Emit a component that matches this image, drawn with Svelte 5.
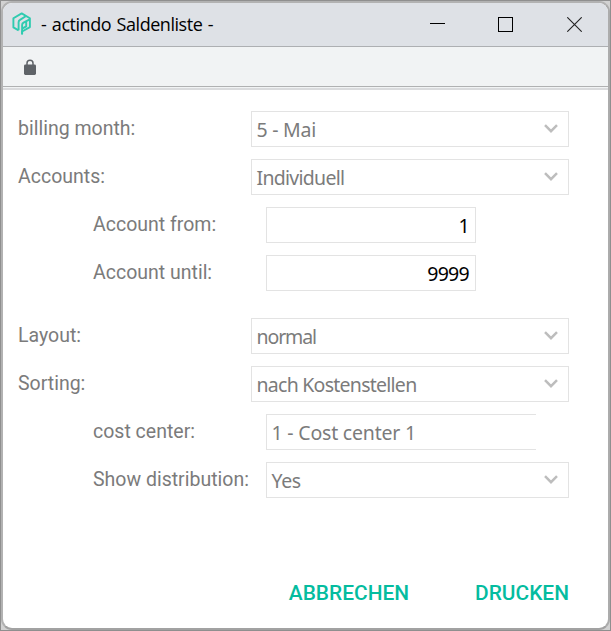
<script>
  const groups = [
    [
      { label: 'billing month:', value: '5 - Mai', kind: 'select', ls: -0.25 },
      { label: 'Accounts:', value: 'Individuell', kind: 'select', ls: -0.72 },
      { label: 'Account from:', value: '1', kind: 'number', sub: true, ls: -0.7 },
      { label: 'Account until:', value: '9999', kind: 'number', sub: true, ls: -0.7 }
    ],
    [
      { label: 'Layout:', value: 'normal', kind: 'select', ls: -1.1 },
      { label: 'Sorting:', value: 'nach Kostenstellen', kind: 'select', ls: -0.74 },
      { label: 'cost center:', value: '1 - Cost center 1', kind: 'open', sub: true, ls: -0.2 },
      { label: 'Show distribution:', value: 'Yes', kind: 'select', sub: true, ls: -0.35 }
    ]
  ];
</script>

<div class="frame">
  <div class="window">
    <header>
      <svg class="logo" width="20" height="24" viewBox="0 0 20 24" fill="none" stroke="#2fcbb0" stroke-width="1.9" stroke-linejoin="round">
        <path d="M6.6 18.3 1.4 15.4V6.3L9.7 1.4l8.2 4.9v8.8l-7.8 4.4v2.8" />
        <path d="M6.6 18.3V10.3q0-1.6 1.4-2.4L13.7 4.3" />
        <path d="M10.1 22.5V13q0-1.6 1.4-2.4l6.2-3.3M10.2 16.6l4-2.2V10" />
      </svg>
      <h1>- actindo Saldenliste -</h1>
      <div class="controls">
        <svg width="15" height="15" shape-rendering="crispEdges"><path d="M0 6.5h15" stroke="#000" /></svg>
        <svg width="15" height="15" shape-rendering="crispEdges"><path d="M.5.5h14v14H.5z" stroke="#000" fill="none" /></svg>
        <svg width="15" height="15"><path d="M.3.3l14.4 14.4M14.7.3.3 14.7" stroke="#222" stroke-width="1.1" /></svg>
      </div>
    </header>
    <div class="address">
      <svg width="12" height="17" viewBox="0 0 12 17">
        <path d="M3 7V4.2a3 3 0 0 1 6 0V7" fill="none" stroke="#5f6368" stroke-width="1.5" />
        <rect y="5.5" width="12" height="10.5" rx="1.4" fill="#5f6368" />
      </svg>
    </div>
    <main>
      {#each groups as group}
        <section>
          {#each group as row}
            <div class="row" class:sub={row.sub}>
              <span class="label">{row.label}</span>
              <div class="field {row.kind}">
                <span style:letter-spacing="{row.ls}px">{row.value}</span>
                {#if row.kind === 'select'}
                  <svg width="14" height="10" viewBox="0 0 14 10"><path d="M1 1.2 7 7.2l6-6" fill="none" stroke="#bdbdbd" stroke-width="2.5" /></svg>
                {/if}
              </div>
            </div>
          {/each}
        </section>
      {/each}
      <footer>
        <button>ABBRECHEN</button>
        <button>DRUCKEN</button>
      </footer>
    </main>
  </div>
</div>

<style>
  .frame {
    box-sizing: border-box;
    width: 611px;
    height: 631px;
    border: 1px solid #8f8f8f;
    background: #d2d2d2;
    overflow: hidden;
  }
  .window {
    box-sizing: border-box;
    width: 609px;
    height: 629px;
    border: 2px solid #b2b2b2;
    border-bottom-color: #a2a2a2;
    border-right-color: #acacac;
    border-radius: 11px;
    background: #fff;
    overflow: hidden;
    display: flex;
    flex-direction: column;
  }
  header {
    box-sizing: border-box;
    height: 44px;
    flex: none;
    background: #dee1e6;
    border-bottom: 1px solid #adafb2;
    display: flex;
    align-items: center;
    padding: 0 26px 0 9px;
  }
  .logo { margin-top: -1px; }
  h1 {
    margin: 0 0 1px 9px;
    font: 400 18px/24px "Open Sans", sans-serif;
    letter-spacing: -0.46px;
    word-spacing: 1.3px;
    color: #000;
    white-space: pre;
  }
  .controls { margin: 0 0 1px auto; display: flex; gap: 54px; }
  .controls svg { display: block; }
  .controls svg:first-child { margin-right: -1px; }
  .address {
    box-sizing: border-box;
    height: 43px;
    flex: none;
    background: #f1f3f4;
    border-bottom: 2px solid #dadbdd;
    box-shadow: inset 0 -1px #f1f3f4, inset 0 -2px #b0b1b2;
    padding: 12px 21px;
  }
  .address svg { display: block; }
  main {
    flex: 1;
    padding: 21px 39px 0 15px;
    display: flex;
    flex-direction: column;
    gap: 27px;
  }
  section { display: flex; flex-direction: column; gap: 12px; }
  .row { display: flex; height: 36px; }
  .label {
    width: 233px;
    flex: none;
    font: 400 19.5px/36px Roboto, sans-serif;
    color: #7b7b7b;
    white-space: nowrap;
  }
  .sub { padding-left: 75px; }
  .sub .label { width: 173px; }
  .field {
    box-sizing: border-box;
    flex: 1;
    border: 1px solid #e3e3e3;
    display: flex;
    justify-content: space-between;
    padding: 0 10px 0 4.5px;
    font: 400 19.5px/36px "Noto Sans", sans-serif;
    color: #7b7b7b;
    white-space: nowrap;
  }
  .field svg { margin-top: 12px; }
  .number { flex: none; width: 210px; justify-content: flex-end; color: #000; padding-right: 6px; }
  .open { flex: none; width: 270px; border-right: 0; }
  footer { display: flex; justify-content: flex-end; gap: 66px; margin-top: 55px; }
  button {
    border: 0;
    background: none;
    padding: 0;
    font: 500 20.9px/26px Roboto, sans-serif;
    color: #04bc9f;
  }
</style>
